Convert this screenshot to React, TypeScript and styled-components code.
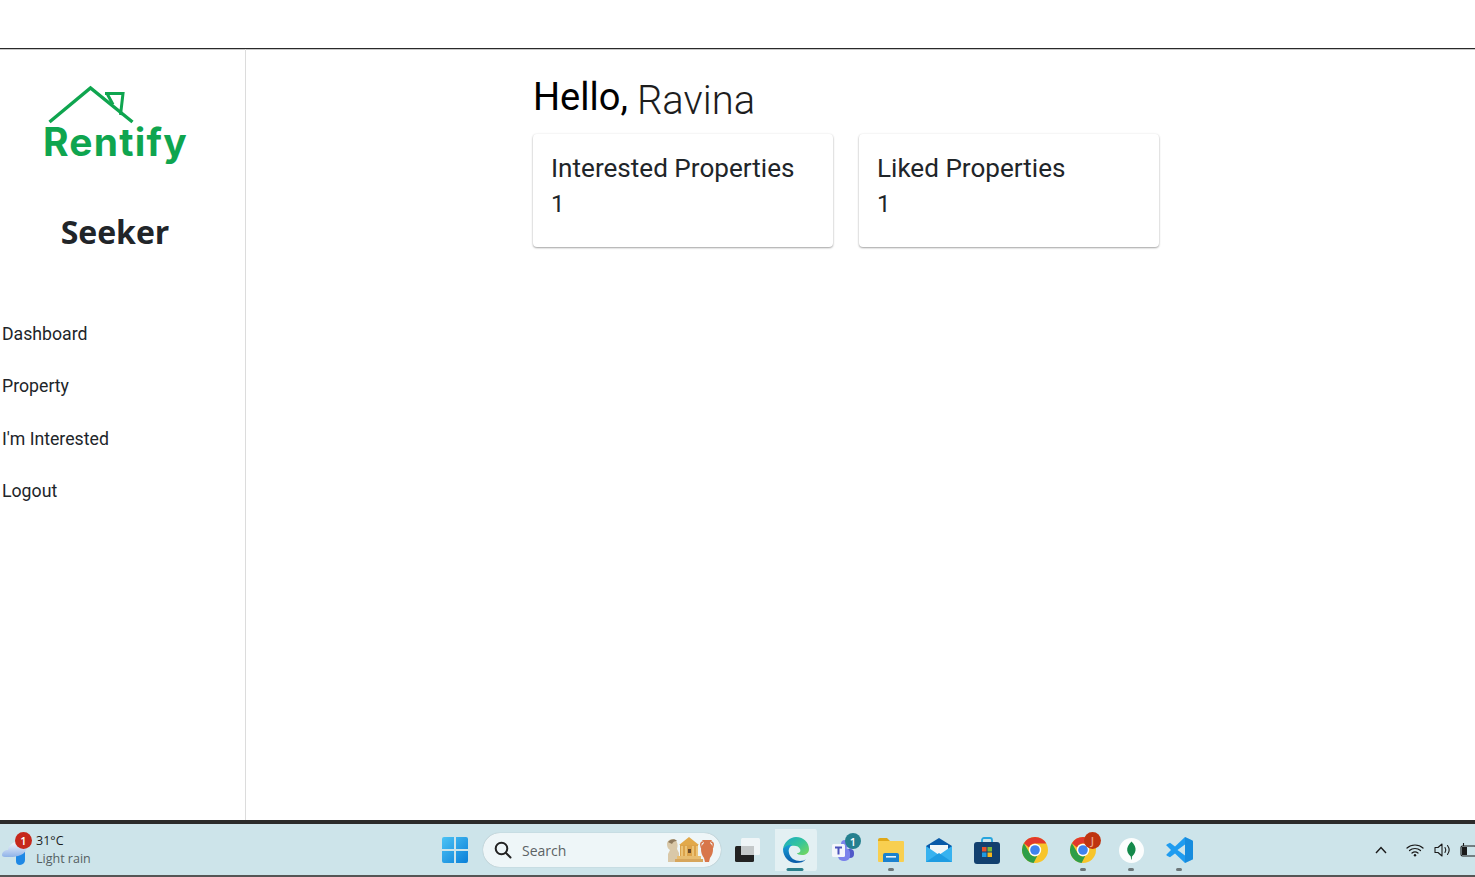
import React from "react";
import styled, { createGlobalStyle } from "styled-components";

const Global = createGlobalStyle`
  html, body { margin: 0; padding: 0; height: 100%; overflow: hidden; background: #fff; }
  #root { height: 100%; }
  * { box-sizing: border-box; }
`;

const Page = styled.div`
  display: flex;
  flex-direction: column;
  height: 877px;
  font-family: Roboto, "Liberation Sans", sans-serif;
  color: #212529;
`;
const TopBar = styled.header`
  flex: 0 0 49px;
  background: #fff;
  border-bottom: 1px solid #2a2a2a;
  box-shadow: 0 1px 0 #c8c8c8;
`;
const Body = styled.div`
  flex: 1;
  display: flex;
  min-height: 0;
`;
const Sidebar = styled.aside`
  flex: 0 0 246px;
  border-right: 1px solid #dcdcdc;
  display: flex;
  flex-direction: column;
`;
const LogoBox = styled.div`
  display: flex;
  flex-direction: column;
  padding: 36px 0 0 43px;
  height: 122px;
`;
const LogoText = styled.div`
  font-family: Inter, "Noto Sans", sans-serif;
  font-weight: 700;
  font-size: 39px;
  line-height: 40px;
  letter-spacing: 1.2px;
  color: #0fa54f;
  margin-top: -5px;
`;
const RoleTitle = styled.h1`
  margin: 39px 0 0;
  padding-right: 15px;
  text-align: center;
  font-family: "Open Sans", sans-serif;
  font-weight: 700;
  font-size: 32px;
  line-height: 44px;
  color: #212529;
`;
const Nav = styled.nav`
  display: flex;
  flex-direction: column;
  margin-top: 54px;
  padding-left: 2px;
`;
const NavItem = styled.a`
  display: block;
  height: 52.3px;
  line-height: 52px;
  font-size: 17.7px;
  color: #212529;
`;
const Main = styled.main`
  flex: 1;
  padding: 24px 0 0 287px;
`;
const Greeting = styled.div`
  font-size: 38px;
  line-height: 48px;
  color: #000;
  display: flex;
  align-items: baseline;
  gap: 9px;
  white-space: nowrap;
`;
const GreetName = styled.span`
  font-size: 40px;
  font-weight: 300;
  color: #1d1d1d;
  position: relative;
  top: 4px;
`;
const Cards = styled.div`
  display: flex;
  gap: 26px;
  margin-top: 13px;
`;
const Card = styled.section`
  width: 300px;
  height: 113px;
  padding: 16px 18px;
  background: #fff;
  border-radius: 4px;
  box-shadow: 0 1px 2px rgba(0,0,0,.35), 0 0 3px rgba(0,0,0,.06);
`;
const CardTitle = styled.div`
  font-size: 26.1px;
  line-height: 36px;
  color: #212529;
`;
const CardValue = styled.div`
  font-size: 24px;
  line-height: 36px;
  color: #212529;
`;
const Taskbar = styled.footer`
  flex: 0 0 57px;
  display: flex;
  align-items: center;
  padding-top: 1px;
  background: #cde4ea;
  border-top: 4px solid #2b2b2b;
  border-bottom: 2px solid #555;
  overflow: hidden;
  position: relative;
`;
const Weather = styled.div`
  flex: 0 0 431px;
  display: flex;
  align-items: center;
  padding-left: 2px;
`;
const WeatherIcon = styled.div`
  position: relative;
  flex: 0 0 34px;
  height: 36px;
  padding-top: 8px;
`;
const Badge = styled.span<{ $bg: string; $right: number; $top: number; $size?: number; $dim?: boolean }>`
  position: absolute;
  display: flex;
  align-items: center;
  justify-content: center;
  width: ${p => p.$size ?? 17}px;
  height: ${p => p.$size ?? 17}px;
  border-radius: 50%;
  background: ${p => p.$bg};
  color: ${p => (p.$dim ? "#eda48c" : "#fff")};
  font: 600 11px "Open Sans", sans-serif;
  right: ${p => p.$right}px;
  top: ${p => p.$top}px;
`;
const WeatherText = styled.div`
  font-family: "Open Sans", sans-serif;
  font-size: 12.5px;
  line-height: 18px;
  color: #1c1c1c;
`;
const WeatherSub = styled.div`
  color: #555f63;
`;
const Slot = styled.div<{ $active?: boolean }>`
  position: relative;
  flex: 0 0 48px;
  height: 42px;
  display: flex;
  align-items: center;
  justify-content: center;
  padding: ${p => (p.$active ? "0 2px 0 4px" : "0")};
  border-radius: 4px;
  background: ${p => (p.$active ? "#e3f0f3" : "transparent")};
  background-clip: content-box;
`;
const Running = styled.span<{ $active?: boolean }>`
  position: absolute;
  bottom: 0;
  left: 50%;
  transform: translateX(-50%);
  width: ${p => (p.$active ? 17 : 6)}px;
  height: 3px;
  border-radius: 2px;
  background: ${p => (p.$active ? "#2b7f8c" : "#6c7679")};
`;
const SearchPill = styled.div`
  flex: 0 0 238px;
  height: 34px;
  margin: 0 2px 0 4px;
  padding: 0 6px 0 11px;
  display: flex;
  align-items: center;
  gap: 10px;
  border-radius: 17px;
  background: #eef6f8;
  box-shadow: 0 0 1px rgba(0,0,0,.3);
  font-family: "Open Sans", sans-serif;
  font-size: 14px;
  color: #5c6365;
`;
const SearchLabel = styled.span`
  flex: 1;
`;
const Tray = styled.div`
  margin-left: auto;
  display: flex;
  align-items: center;
  gap: 8px;
  margin-right: -3px;
`;
const TrayChevron = styled.div`
  display: flex;
  margin-right: 11px;
`;
const TrayWifi = styled.div`
  display: flex;
  margin-right: 2px;
`;

const WindowsIcon = () => (
  <svg width="26" height="26" viewBox="0 0 26 26">
    <defs>
      <linearGradient id="w" x1="0" y1="0" x2="1" y2="1"><stop offset="0" stopColor="#4cc3f5" /><stop offset="1" stopColor="#0a7fd8" /></linearGradient>
    </defs>
    <path fill="url(#w)" d="M0 2a2 2 0 0 1 2-2h10v12H0zM14 0h10a2 2 0 0 1 2 2v10H14zM0 14h12v12H2a2 2 0 0 1-2-2zM14 14h12v10a2 2 0 0 1-2 2H14z" />
  </svg>
);
const SearchIcon = () => (
  <svg width="18" height="18" viewBox="0 0 18 18" fill="none" stroke="#222" strokeWidth="2" strokeLinecap="round">
    <circle cx="7.5" cy="7.5" r="5.8" />
    <path d="M12 12l4.5 4.5" />
  </svg>
);
const MuseumArt = () => (
  <svg width="50" height="26" viewBox="0 0 50 26">
    <path fill="#d9c8a8" d="M2 7c0-4 5-6 8-4 3 2 3 6 2 9l2 4v9H3v-8l2-4C3 12 2 10 2 7z" />
    <path fill="#8f7a5c" d="M3 5c2-3 7-4 9-1-3 0-4 1-5 3-1-1-3-1-4-2z" />
    <path fill="#e2a94a" d="M14 8L24 0l10 8z" />
    <rect x="15" y="8" width="18" height="11" fill="#dca34a" />
    <path stroke="#f3d28c" strokeWidth="1.4" d="M17 9v10M21 9v10M28 9v10M32 9v10" />
    <rect x="23" y="12" width="3" height="4" fill="#6b4a28" />
    <rect x="12" y="19" width="24" height="3" fill="#e8bd70" />
    <rect x="10" y="22" width="28" height="3" fill="#d7a65c" />
    <path fill="#d8764a" d="M37 3h10l-2 3c4 3 4 10 0 15l-1 4h-4l-1-4c-4-5-4-12 0-15z" />
    <path fill="none" stroke="#d8764a" strokeWidth="1.5" d="M38 5c-3 0-3 5 0 7M46 5c3 0 3 5 0 7" />
  </svg>
);
const TaskViewIcon = () => (
  <svg width="26" height="26" viewBox="0 0 26 26">
    <rect x="1" y="9" width="19" height="16" rx="1.5" fill="#222" />
    <rect x="7" y="1" width="19" height="17" rx="1.5" fill="#f4f8f9" fillOpacity=".85" />
    <rect x="7" y="9" width="13" height="9" fill="#c4c8c9" />
  </svg>
);
const EdgeIcon = () => (
  <svg width="28" height="28" viewBox="0 0 28 28">
    <defs>
      <linearGradient id="e1" x1="0" y1="0" x2="1" y2="1"><stop offset="0" stopColor="#19a9c9" /><stop offset=".5" stopColor="#35c59a" /><stop offset="1" stopColor="#7cd958" /></linearGradient>
      <linearGradient id="e2" x1="0" y1="0" x2="0" y2="1"><stop offset="0" stopColor="#18a0d8" /><stop offset="1" stopColor="#0a5aa8" /></linearGradient>
    </defs>
    <path fill="url(#e1)" d="M1 13C2 6 8 1 14 1c8 0 13 6 13 12 0 4-3 6-7 6-3 0-5-1-5-2 3 0 4-2 3-4-1-3-5-4-9-3-4 1-7 3-8 3z" />
    <path fill="url(#e2)" d="M1 13c2-3 6-5 9-4-3 2-4 5-3 8 1 5 6 8 11 8 3 0 5-1 6-2-2 3-6 4-10 4C7 27 1 21 1 13z" />
  </svg>
);
const TeamsIcon = () => (
  <svg width="24" height="22" viewBox="0 0 24 22">
    <circle cx="20" cy="7" r="3" fill="#7b83eb" />
    <rect x="13" y="10" width="10" height="9" rx="4" fill="#5059c9" />
    <circle cx="14" cy="5" r="4" fill="#7b83eb" />
    <rect x="7" y="9" width="12" height="13" rx="5" fill="#7b83eb" />
    <rect x="1" y="5" width="13" height="13" rx="1.5" fill="#f4f6fb" />
    <path stroke="#4b53bc" strokeWidth="2" d="M4 8.5h7M7.5 8.5V15.5" fill="none" />
  </svg>
);
const FolderIcon = () => (
  <svg width="28" height="26" viewBox="0 0 28 26">
    <path fill="#e0a818" d="M1 3a2 2 0 0 1 2-2h7l3 3h-12z" />
    <path fill="#f8cf50" d="M1 4h25a1 1 0 0 1 1 1v19a1 1 0 0 1-1 1H2a1 1 0 0 1-1-1z" />
    <path fill="#1a82cf" d="M6 18a2 2 0 0 1 2-2h12a2 2 0 0 1 2 2v7H6z" />
    <rect x="9" y="19" width="10" height="1.6" fill="#e8f4fb" />
  </svg>
);
const MailIcon = () => (
  <svg width="28" height="26" viewBox="0 0 28 26">
    <path fill="#0a5aa8" d="M14 1L1 9v3h26V9z" />
    <path fill="#f1f6f8" d="M5 8h18v10H5z" />
    <path fill="#37b2ef" d="M1 9l13 9 13-9v16H1z" />
    <path fill="#1e9ce2" d="M1 25l13-9 13 9z" />
  </svg>
);
const StoreIcon = () => (
  <svg width="26" height="27" viewBox="0 0 26 27">
    <path fill="none" stroke="#27a5de" strokeWidth="1.8" d="M8 6V3a2 2 0 0 1 2-2h6a2 2 0 0 1 2 2v3" />
    <rect x="0" y="5" width="26" height="22" rx="3" fill="#12406f" />
    <rect x="8" y="10" width="4.5" height="4.5" fill="#e8532b" />
    <rect x="13.5" y="10" width="4.5" height="4.5" fill="#7cb83a" />
    <rect x="8" y="15.5" width="4.5" height="4.5" fill="#1f9ae0" />
    <rect x="13.5" y="15.5" width="4.5" height="4.5" fill="#f6b61c" />
  </svg>
);
const ChromeIcon = () => (
  <svg width="26" height="26" viewBox="0 0 26 26">
    <circle cx="13" cy="13" r="13" fill="#f7c52b" />
    <path fill="#e2382c" d="M13 0a13 13 0 0 1 11.3 6.5H13a6.5 6.5 0 0 0-6 4L1.9 6.2A13 13 0 0 1 13 0z" />
    <path fill="#2e9e48" d="M1.9 6.2L7.6 16a6.5 6.5 0 0 0 7.6 3l-3.6 6.9A13 13 0 0 1 1.9 6.2z" />
    <circle cx="13" cy="13" r="6.2" fill="#fff" />
    <circle cx="13" cy="13" r="4.8" fill="#3f82ee" />
  </svg>
);
const CompassIcon = () => (
  <svg width="25" height="25" viewBox="0 0 25 25">
    <circle cx="12.5" cy="12.5" r="12.5" fill="#fbfdfd" />
    <path fill="#13894a" d="M12.5 3.5c3 3 4.5 6 4 9-.4 3-2.5 5-3.5 6l-.3 3h-.6l-.3-3c-1-1-3.3-3-3.6-6-.4-3 1.3-6 4.3-9z" />
  </svg>
);
const VSCodeIcon = () => (
  <svg width="27" height="26" viewBox="0 0 27 26">
    <path fill="#1f9cf0" d="M19 0l7 3.2a1.5 1.5 0 0 1 1 1.4v16.8a1.5 1.5 0 0 1-1 1.4L19 26 9 16.5l-5 3.8-3-1.6a1 1 0 0 1 0-1.7L5 13 1 9a1 1 0 0 1 0-1.7l3-1.6 5 3.8zm0 7.5L11.5 13l7.5 5.500z" />
    <path fill="#0a6fbe" d="M19 0l7 3.2a1.5 1.5 0 0 1 1 1.4v16.8a1.5 1.5 0 0 1-1 1.4L19 26z" opacity=".35" />
  </svg>
);
const CloudIcon = () => (
  <svg width="28" height="26" viewBox="0 0 28 26">
    <defs>
      <linearGradient id="c" x1="0" y1="0" x2="0" y2="1"><stop offset="0" stopColor="#f4f7fc" /><stop offset="1" stopColor="#8fb2e8" /></linearGradient>
    </defs>
    <path fill="#1e88e5" d="M14 12h9v8a5 5 0 0 1-5 5 4 4 0 0 1-4-4z" />
    <path fill="url(#c)" d="M0 15c0-3 3-5 6-5 1-5 5-8 9-8 5 0 9 4 9 8-1 3-4 5-8 6-2 .5-4 1-8 1H3c-2 0-3-1-3-2z" />
  </svg>
);
const ChevronIcon = () => (
  <svg width="12" height="8" viewBox="0 0 12 8" fill="none" stroke="#1a1a1a" strokeWidth="1.4">
    <path d="M1 7l5-5.5L11 7" />
  </svg>
);
const WifiIcon = () => (
  <svg width="18" height="14" viewBox="0 0 18 14" fill="none" stroke="#1a1a1a" strokeWidth="1.2" strokeLinecap="round">
    <path d="M1 5c4.5-4 11.500-4 16 0M3.500 7.500c3-2.700 8-2.700 11 0M6 10c1.700-1.400 4.300-1.400 6 0" />
    <circle cx="9" cy="12.300" r="1.200" fill="#1a1a1a" stroke="none" />
  </svg>
);
const SpeakerIcon = () => (
  <svg width="18" height="16" viewBox="0 0 18 16" fill="none" stroke="#1a1a1a" strokeWidth="1.1" strokeLinecap="round" strokeLinejoin="round">
    <path d="M1 5.500h3L8 2v12L4 10.500H1z" />
    <path d="M11 5.500c1 1.500 1 3.500 0 5M13.500 3.500c2 2.700 2 6.300 0 9" />
  </svg>
);
const BatteryIcon = () => (
  <svg width="18" height="14" viewBox="0 0 18 14" fill="none" stroke="#1a1a1a" strokeWidth="1.1">
    <rect x="1" y="3" width="15" height="10" rx="1.5" />
    <path fill="#1a1a1a" stroke="none" d="M2 12V4h5v8z" />
    <path d="M3.500 0v3" />
  </svg>
);

const navItems = ["Dashboard", "Property", "I'm Interested", "Logout"];
const stats = [
  { title: "Interested Properties", value: 1 },
  { title: "Liked Properties", value: 1 },
];

export default function App() {
  return (
    <Page>
      <Global />
      <TopBar />
      <Body>
        <Sidebar>
          <LogoBox>
            <svg width="90" height="42" viewBox="0 0 90 42" fill="none" stroke="#0fa54f" strokeWidth="3.400" style={{ marginLeft: 5 }}>
              <path d="M1.500 37L42.500 3 84.500 37" />
              <path d="M57 8.500H75L72.500 30M59 8.500l6 11" strokeWidth="3" />
            </svg>
            <LogoText>Rentify</LogoText>
          </LogoBox>
          <RoleTitle>Seeker</RoleTitle>
          <Nav>
            {navItems.map(n => <NavItem key={n}>{n}</NavItem>)}
          </Nav>
        </Sidebar>
        <Main>
          <Greeting>Hello,<GreetName>Ravina</GreetName></Greeting>
          <Cards>
            {stats.map(s => (
              <Card key={s.title}>
                <CardTitle>{s.title}</CardTitle>
                <CardValue>{s.value}</CardValue>
              </Card>
            ))}
          </Cards>
        </Main>
      </Body>
      <Taskbar>
        <Weather>
          <WeatherIcon>
            <CloudIcon />
            <Badge $bg="#c6281c" $right={4} $top={0}>1</Badge>
          </WeatherIcon>
          <WeatherText>
            31°C
            <WeatherSub>Light rain</WeatherSub>
          </WeatherText>
        </Weather>
        <Slot><WindowsIcon /></Slot>
        <SearchPill>
          <SearchIcon />
          <SearchLabel>Search</SearchLabel>
          <MuseumArt />
        </SearchPill>
        <Slot><TaskViewIcon /></Slot>
        <Slot $active><EdgeIcon /><Running $active /></Slot>
        <Slot><TeamsIcon /><Badge $bg="#25808f" $right={6} $top={4} $size={16}>1</Badge></Slot>
        <Slot><FolderIcon /><Running /></Slot>
        <Slot><MailIcon /></Slot>
        <Slot><StoreIcon /></Slot>
        <Slot><ChromeIcon /></Slot>
        <Slot><ChromeIcon /><Badge $bg="#bf3410" $right={6} $top={3} $dim>J</Badge><Running /></Slot>
        <Slot><CompassIcon /><Running /></Slot>
        <Slot><VSCodeIcon /><Running /></Slot>
        <Tray>
          <TrayChevron><ChevronIcon /></TrayChevron>
          <TrayWifi><WifiIcon /></TrayWifi>
          <SpeakerIcon />
          <BatteryIcon />
        </Tray>
      </Taskbar>
    </Page>
  );
}
